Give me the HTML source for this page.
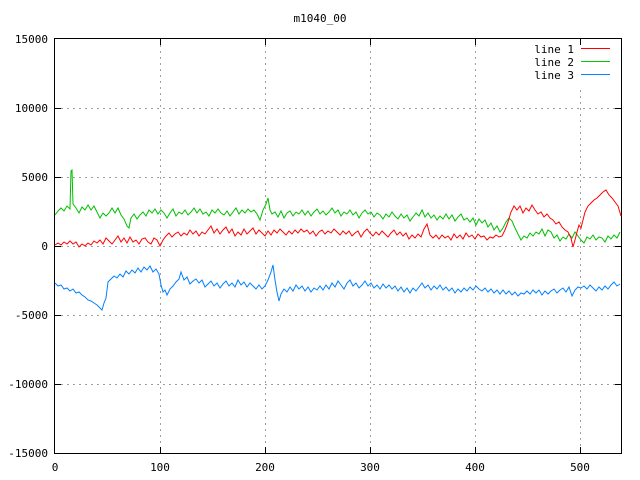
<!DOCTYPE html>
<html><head><meta charset="utf-8"><style>
body{margin:0;background:#fff}
svg{display:block}
text{font-family:"DejaVu Sans Mono","Liberation Mono",monospace;font-size:11px;fill:#000}
</style></head><body>
<svg width="640" height="480" xmlns="http://www.w3.org/2000/svg">
<rect width="640" height="480" fill="#fff"/>
<g stroke="#a0a0a0" stroke-dasharray="2,4" stroke-width="1">
<line x1="55" y1="108.5" x2="621" y2="108.5"/>
<line x1="55" y1="177.5" x2="621" y2="177.5"/>
<line x1="55" y1="246.5" x2="621" y2="246.5"/>
<line x1="55" y1="315.5" x2="621" y2="315.5"/>
<line x1="55" y1="384.5" x2="621" y2="384.5"/>
<line x1="160.5" y1="39" x2="160.5" y2="453"/>
<line x1="265.5" y1="39" x2="265.5" y2="453"/>
<line x1="370.5" y1="39" x2="370.5" y2="453"/>
<line x1="475.5" y1="39" x2="475.5" y2="453"/>
<line x1="580.5" y1="90" x2="580.5" y2="453"/>
</g>
<rect x="54.5" y="38.5" width="567" height="415" fill="none" stroke="#000"/>
<g stroke="#000">
<line x1="55" y1="108.5" x2="61" y2="108.5"/><line x1="615" y1="108.5" x2="621" y2="108.5"/>
<line x1="55" y1="177.5" x2="61" y2="177.5"/><line x1="615" y1="177.5" x2="621" y2="177.5"/>
<line x1="55" y1="246.5" x2="61" y2="246.5"/><line x1="615" y1="246.5" x2="621" y2="246.5"/>
<line x1="55" y1="315.5" x2="61" y2="315.5"/><line x1="615" y1="315.5" x2="621" y2="315.5"/>
<line x1="55" y1="384.5" x2="61" y2="384.5"/><line x1="615" y1="384.5" x2="621" y2="384.5"/>
<line x1="160.5" y1="453" x2="160.5" y2="447"/><line x1="160.5" y1="39" x2="160.5" y2="45"/>
<line x1="265.5" y1="453" x2="265.5" y2="447"/><line x1="265.5" y1="39" x2="265.5" y2="45"/>
<line x1="370.5" y1="453" x2="370.5" y2="447"/><line x1="370.5" y1="39" x2="370.5" y2="45"/>
<line x1="475.5" y1="453" x2="475.5" y2="447"/><line x1="475.5" y1="39" x2="475.5" y2="45"/>
<line x1="580.5" y1="453" x2="580.5" y2="447"/><line x1="580.5" y1="39" x2="580.5" y2="45"/>
</g>
<g text-anchor="end">
<text x="48" y="43">15000</text><text x="48" y="112">10000</text><text x="48" y="181">5000</text>
<text x="48" y="250">0</text><text x="48" y="319">-5000</text><text x="48" y="388">-10000</text><text x="48" y="457">-15000</text>
</g>
<g text-anchor="middle">
<text x="55" y="471">0</text><text x="160" y="471">100</text><text x="265" y="471">200</text>
<text x="370" y="471">300</text><text x="475" y="471">400</text><text x="580" y="471">500</text>
<text x="320" y="22">m1040_00</text>
</g>
<g text-anchor="end">
<text x="574" y="53">line 1</text><text x="574" y="66">line 2</text><text x="574" y="79">line 3</text>
</g>
<line x1="581" y1="48.5" x2="610" y2="48.5" stroke="#f00"/>
<line x1="581" y1="61.5" x2="610" y2="61.5" stroke="#0c0"/>
<line x1="581" y1="74.5" x2="610" y2="74.5" stroke="#08f"/>
<polyline fill="none" stroke="#00c000" points="55,215 58,211 61,208 64,211 67,206 70,209 71,171 72,170 73,204 76,208 79,213 82,207 85,210 88,205 91,210 94,206 97,212 100,218 103,213 106,216 109,213 112,208 115,213 118,208 121,215 124,219 127,226 129,228 131,218 134,214 137,219 140,215 143,212 146,216 149,210 152,213 155,209 158,214 161,210 164,213 167,218 170,213 173,209 176,216 179,212 182,214 185,210 188,215 191,212 194,208 197,213 200,209 203,214 206,212 209,216 212,210 215,213 218,209 221,213 224,215 227,211 230,216 233,212 236,208 239,214 242,210 245,213 248,209 251,212 254,210 257,214 260,220 263,210 266,204 268,198 270,210 272,214 275,212 278,217 281,211 284,218 287,213 290,211 293,216 296,212 299,214 302,210 305,215 308,211 311,216 314,212 317,209 320,214 323,211 326,215 329,212 332,208 335,213 338,210 341,216 344,212 347,214 350,210 353,215 356,212 359,218 362,213 365,210 368,214 371,212 374,217 377,213 380,215 383,219 386,214 389,217 392,212 395,216 398,219 401,214 404,218 407,215 410,221 413,217 416,213 419,216 422,210 425,217 428,213 431,218 434,215 437,220 440,216 443,219 446,214 449,219 452,215 455,221 458,217 461,214 464,220 467,218 470,222 473,218 476,225 479,219 482,223 485,220 488,227 491,223 494,230 497,226 500,232 503,228 506,222 509,218 512,221 515,228 518,234 521,240 524,236 527,238 530,233 533,236 536,232 539,234 542,229 545,236 548,230 551,232 554,238 557,235 560,241 563,237 566,239 569,234 572,238 575,232 578,236 581,240 584,243 587,237 590,239 593,235 596,240 599,237 602,238 605,242 608,236 611,239 614,235 617,238 620,232"/>
<polyline fill="none" stroke="#ff0000" points="55,245 58,243 61,245 64,242 67,244 70,241 73,244 76,242 79,247 82,244 85,246 88,243 91,245 94,241 97,243 100,240 103,244 106,238 109,241 112,244 115,240 118,236 121,242 124,238 127,243 130,237 133,242 136,240 139,244 142,239 145,238 148,242 151,244 154,238 157,240 160,246 163,240 166,236 169,233 172,237 175,234 178,232 181,236 184,233 187,235 190,230 193,234 196,231 199,236 202,232 205,234 208,230 211,226 214,233 217,229 220,234 223,230 226,227 229,233 232,229 235,236 238,232 241,235 244,229 247,234 250,231 253,228 256,234 259,230 262,233 265,236 268,231 271,235 274,230 277,233 280,229 283,232 286,235 289,231 292,234 295,230 298,233 301,229 304,232 307,230 310,234 313,231 316,236 319,232 322,230 325,234 328,231 331,233 334,229 337,232 340,235 343,231 346,234 349,231 352,236 355,233 358,231 361,237 364,232 367,229 370,233 373,236 376,232 379,235 382,231 385,234 388,237 391,233 394,230 397,235 400,232 403,236 406,233 409,239 412,235 415,238 418,234 421,237 424,229 427,224 430,235 433,238 436,235 439,239 442,235 445,238 448,236 451,240 454,234 457,238 460,235 463,239 466,233 469,237 472,235 475,239 478,234 481,237 484,236 487,240 490,237 493,238 496,235 499,237 502,236 505,230 508,222 511,212 514,206 517,210 520,206 523,213 526,208 529,211 532,205 535,210 538,214 541,212 544,217 547,214 550,218 553,220 556,224 559,222 562,227 565,230 568,232 571,238 573,247 575,240 577,232 579,225 581,228 583,220 585,212 588,206 591,203 594,200 597,198 600,195 603,192 606,190 609,195 612,198 615,202 618,206 621,216"/>
<polyline fill="none" stroke="#0080ff" points="55,283 58,286 61,285 64,289 67,288 70,291 73,289 76,293 79,292 82,295 85,297 88,300 91,301 94,303 97,305 100,308 102,310 104,303 106,298 108,282 111,279 114,276 117,278 120,274 123,277 126,271 129,274 132,270 135,273 138,268 141,272 144,267 147,270 150,266 153,272 156,269 159,274 161,285 163,292 165,290 167,295 170,289 173,286 176,282 179,279 181,272 184,280 187,277 190,284 193,281 196,279 199,283 202,280 205,287 208,284 211,281 214,286 217,283 220,288 223,284 226,281 229,286 232,283 235,287 238,280 241,285 244,282 247,287 250,283 253,286 256,289 259,285 262,289 265,286 268,280 271,272 273,265 275,280 277,292 279,301 281,294 284,289 287,292 290,287 293,291 296,285 299,289 302,286 305,291 308,287 311,292 314,288 317,290 320,286 323,290 326,285 329,289 332,283 335,287 338,281 341,285 344,289 347,283 350,280 353,286 356,283 359,288 362,285 365,281 368,286 371,283 374,288 377,285 380,289 383,284 386,288 389,285 392,289 395,286 398,291 401,287 404,292 407,288 410,293 413,288 416,291 419,287 422,283 425,288 428,285 431,290 434,286 437,289 440,285 443,290 446,287 449,291 452,288 455,293 458,289 461,292 464,288 467,291 470,287 473,290 476,286 479,289 482,291 485,288 488,292 491,289 494,293 497,290 500,294 503,290 506,294 509,291 512,295 515,292 518,296 521,293 524,294 527,291 530,294 533,290 536,293 539,290 542,295 545,291 548,294 551,291 554,289 557,293 560,290 563,288 566,292 569,287 572,296 575,290 578,287 581,288 584,286 587,289 590,285 593,288 596,291 599,287 602,290 605,286 608,289 611,285 614,282 617,286 620,284"/>
</svg>
</body></html>
